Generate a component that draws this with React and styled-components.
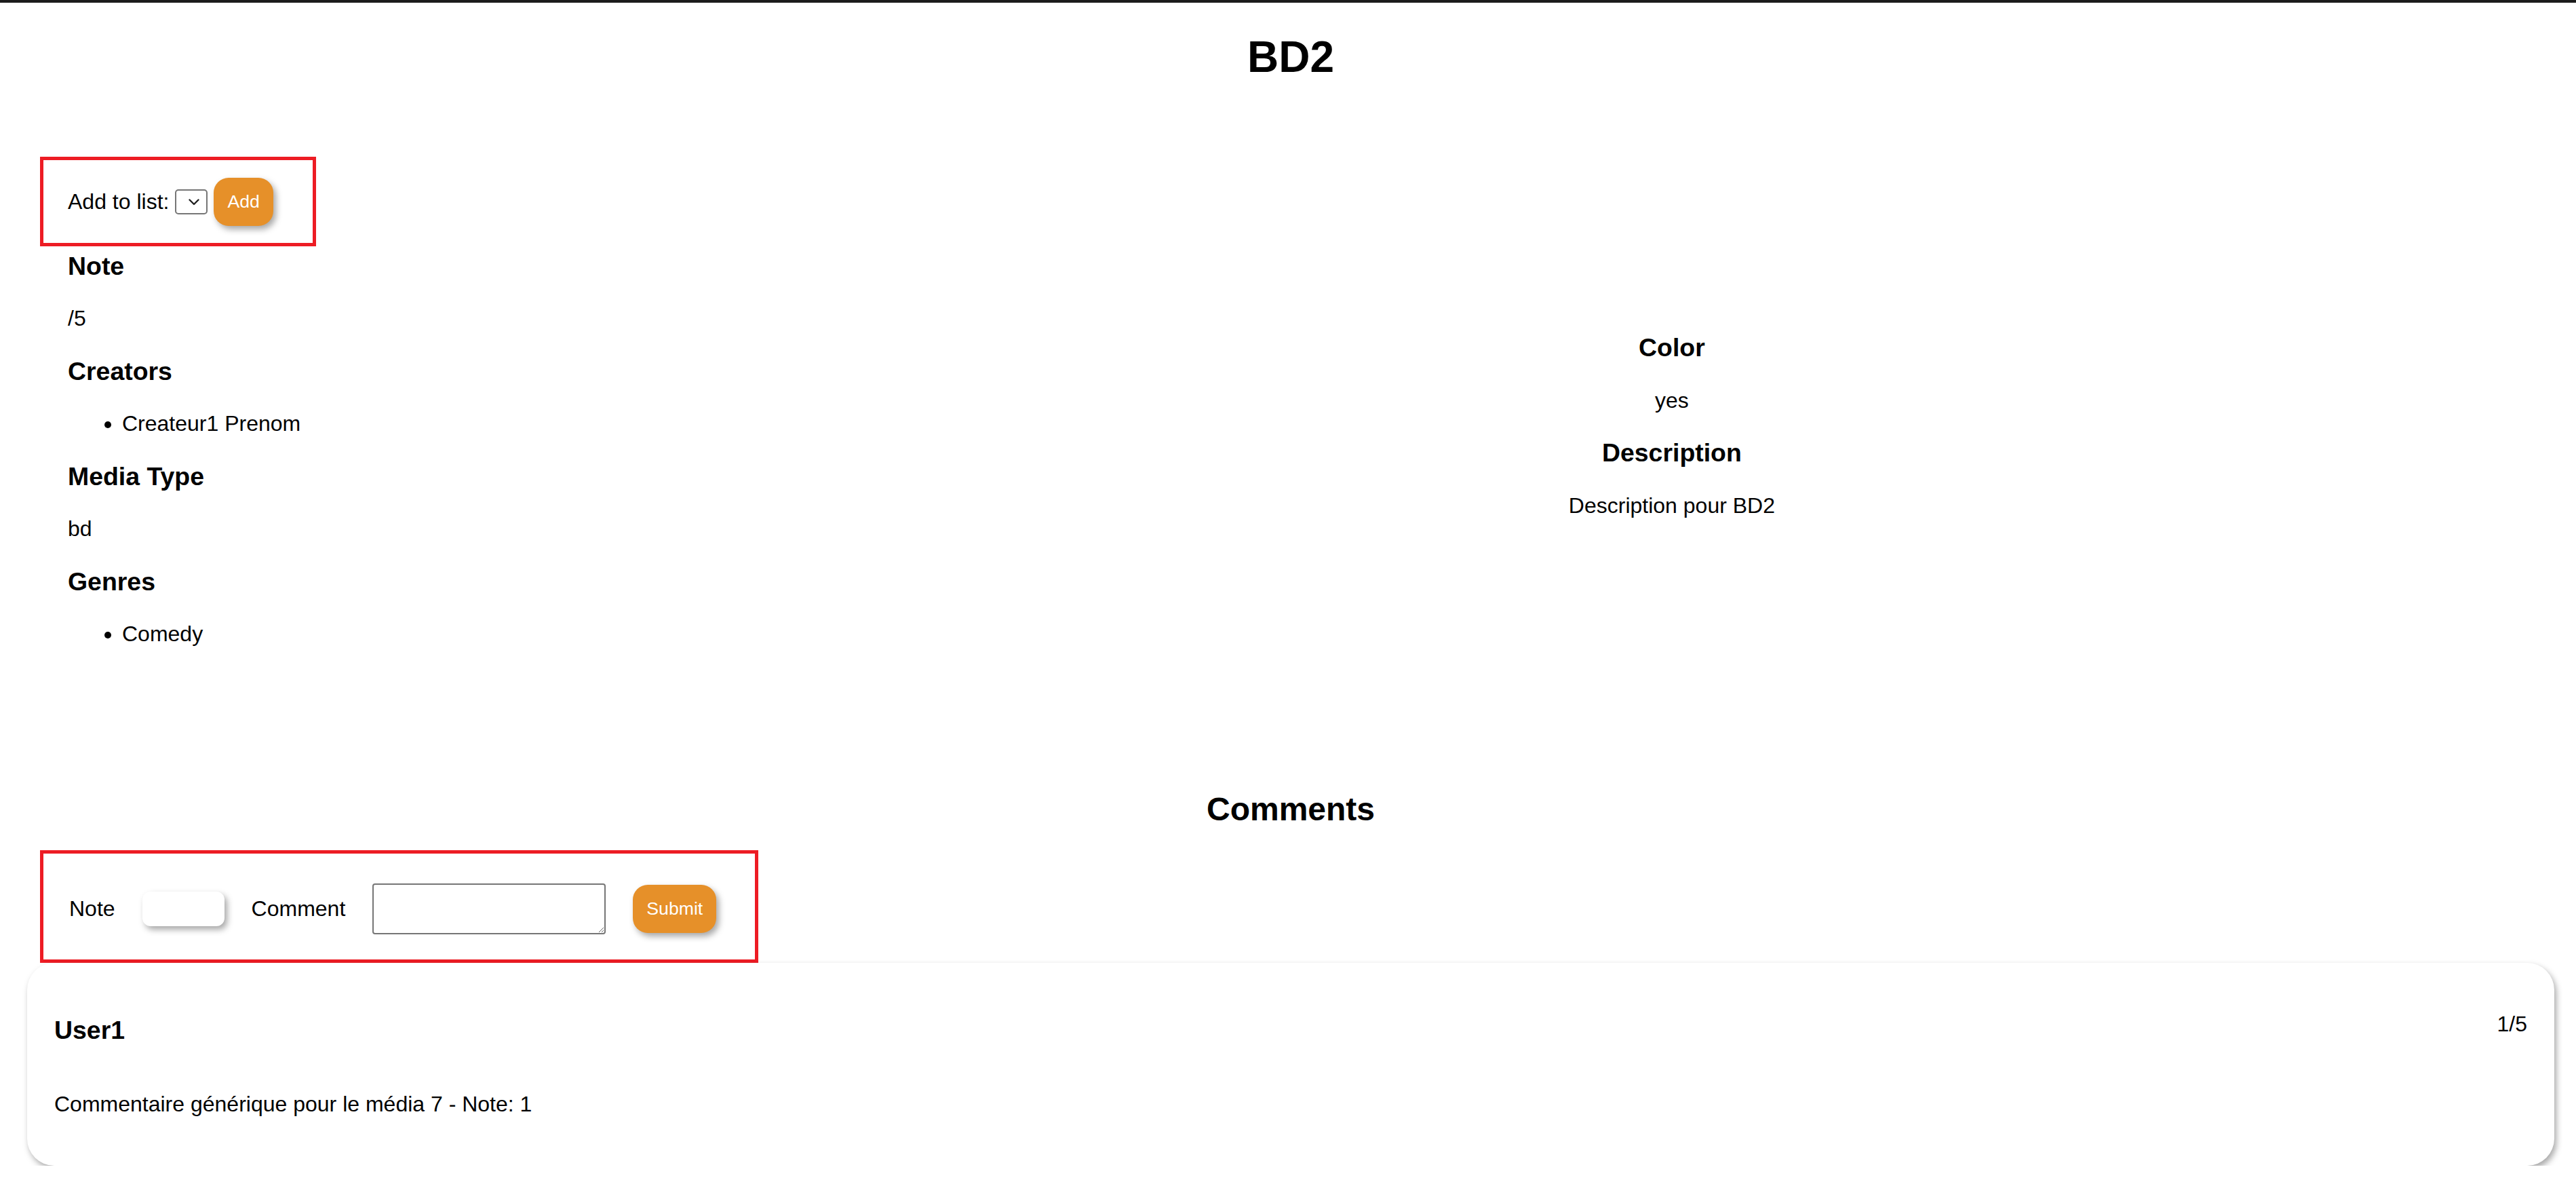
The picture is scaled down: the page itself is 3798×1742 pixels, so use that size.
import styled, { createGlobalStyle } from 'styled-components';

const GlobalStyle = createGlobalStyle`
  html, body {
    margin: 0;
    padding: 0;
    background: #fff;
  }
  body {
    font-family: "Liberation Sans", Arial, sans-serif;
    font-size: 32px;
    color: #000;
  }
`;

const Page = styled.div`
  border-top: 4px solid #1b1b1b;
`;

const Title = styled.h1`
  font-size: 64px;
  font-weight: bold;
  text-align: center;
  padding-left: 8px;
  margin: 43px 0 110px;
`;

const Details = styled.div`
  display: grid;
  grid-template-columns: 29.8% 1fr;
  align-items: start;
`;

const LeftColumn = styled.div`
  padding-left: 59px;
`;

const RightColumn = styled.div`
  text-align: center;
  padding-top: 223px;
`;

const BoxedForm = styled.form`
  display: flex;
  align-items: center;
  width: fit-content;
  border: 5px solid #ed1c24;
  gap: ${(p) => p.$gap}px;
  padding: ${(p) => p.$padding};
  margin-left: ${(p) => p.$indent || 0}px;
`;

const Label = styled.label`
  font-size: 32px;
  line-height: normal;
`;

const SelectBox = styled.div`
  box-sizing: border-box;
  width: 48px;
  height: 37px;
  border: 2px solid #767676;
  border-radius: 5px;
  background: #fff;
  display: flex;
  align-items: center;
  justify-content: flex-end;
  padding-right: 10px;
`;

const OrangeButton = styled.button`
  font-family: "Liberation Sans", Arial, sans-serif;
  font-size: 26.67px;
  line-height: normal;
  color: #fff;
  background: #e69029;
  border: none;
  border-radius: 22px;
  padding: 20px;
  box-shadow: 4px 5px 10px rgba(0, 0, 0, 0.35);
  cursor: pointer;
`;

const Info = styled.div`
  padding-left: 41px;
`;

const SectionTitle = styled.h3`
  font-size: 37.44px;
  font-weight: bold;
  margin: 37.44px 0;
  ${Info} > &:first-child {
    margin-top: 8px;
  }
`;

const Text = styled.p`
  font-size: 32px;
  margin: 32px 0;
`;

const List = styled.ul`
  font-size: 32px;
  margin: 32px 0;
  padding-left: 80px;
  list-style: disc;
`;

const CommentsTitle = styled.h2`
  font-size: 48px;
  font-weight: bold;
  text-align: center;
  padding-left: 8px;
  margin: 180px 0 33px;
`;

const NoteInput = styled.input`
  box-sizing: border-box;
  width: 121px;
  height: 51px;
  border: none;
  border-radius: 12px;
  background: #fff;
  box-shadow: 4px 5px 10px rgba(0, 0, 0, 0.35);
  outline: none;
`;

const CommentArea = styled.textarea`
  box-sizing: border-box;
  width: 344px;
  height: 75px;
  border: 2px solid #767676;
  border-radius: 4px;
  font-family: "Liberation Mono", monospace;
  font-size: 26px;
  display: block;
  resize: both;
`;

const CommentCard = styled.div`
  margin: 0 32px 0 40px;
  padding: 40px 40px 40px;
  border-radius: 40px;
  background: #fff;
  box-shadow: 3px 5px 10px rgba(0, 0, 0, 0.35);
`;

const CardHeader = styled.div`
  display: flex;
  justify-content: space-between;
  align-items: flex-start;
`;

const Chevron = () => (
  <svg width="16" height="10" viewBox="0 0 16 10">
    <path d="M1.5 1.5 L8 8 L14.5 1.5" fill="none" stroke="#222" strokeWidth="2.4" strokeLinecap="round" strokeLinejoin="round" />
  </svg>
);

const App = () => {
  const creators = ['Createur1 Prenom'];
  const genres = ['Comedy'];

  return (
    <>
      <GlobalStyle />
      <Page>
        <Title>BD2</Title>

        <Details>
          <LeftColumn>
            <BoxedForm $gap={9} $padding="26px 58px 25px 36px" onSubmit={(e) => e.preventDefault()}>
              <Label>Add to list:</Label>
              <SelectBox>
                <Chevron />
              </SelectBox>
              <OrangeButton type="submit">Add</OrangeButton>
            </BoxedForm>

            <Info>
              <SectionTitle>Note</SectionTitle>
              <Text>/5</Text>
              <SectionTitle>Creators</SectionTitle>
              <List>
                {creators.map((c) => (
                  <li key={c}>{c}</li>
                ))}
              </List>
              <SectionTitle>Media Type</SectionTitle>
              <Text>bd</Text>
              <SectionTitle>Genres</SectionTitle>
              <List>
                {genres.map((g) => (
                  <li key={g}>{g}</li>
                ))}
              </List>
            </Info>
          </LeftColumn>

          <RightColumn>
            <SectionTitle>Color</SectionTitle>
            <Text>yes</Text>
            <SectionTitle>Description</SectionTitle>
            <Text>Description pour BD2</Text>
          </RightColumn>
        </Details>

        <CommentsTitle>Comments</CommentsTitle>

        <BoxedForm $gap={40} $indent={59} $padding="44px 57px 37px 38px" onSubmit={(e) => e.preventDefault()}>
          <Label>Note</Label>
          <NoteInput type="text" />
          <Label>Comment</Label>
          <CommentArea />
          <OrangeButton type="submit">Submit</OrangeButton>
        </BoxedForm>

        <CommentCard>
          <CardHeader>
            <SectionTitle>User1</SectionTitle>
            <Text>1/5</Text>
          </CardHeader>
          <Text>Commentaire générique pour le média 7 - Note: 1</Text>
        </CommentCard>
      </Page>
    </>
  );
};

export default App;
